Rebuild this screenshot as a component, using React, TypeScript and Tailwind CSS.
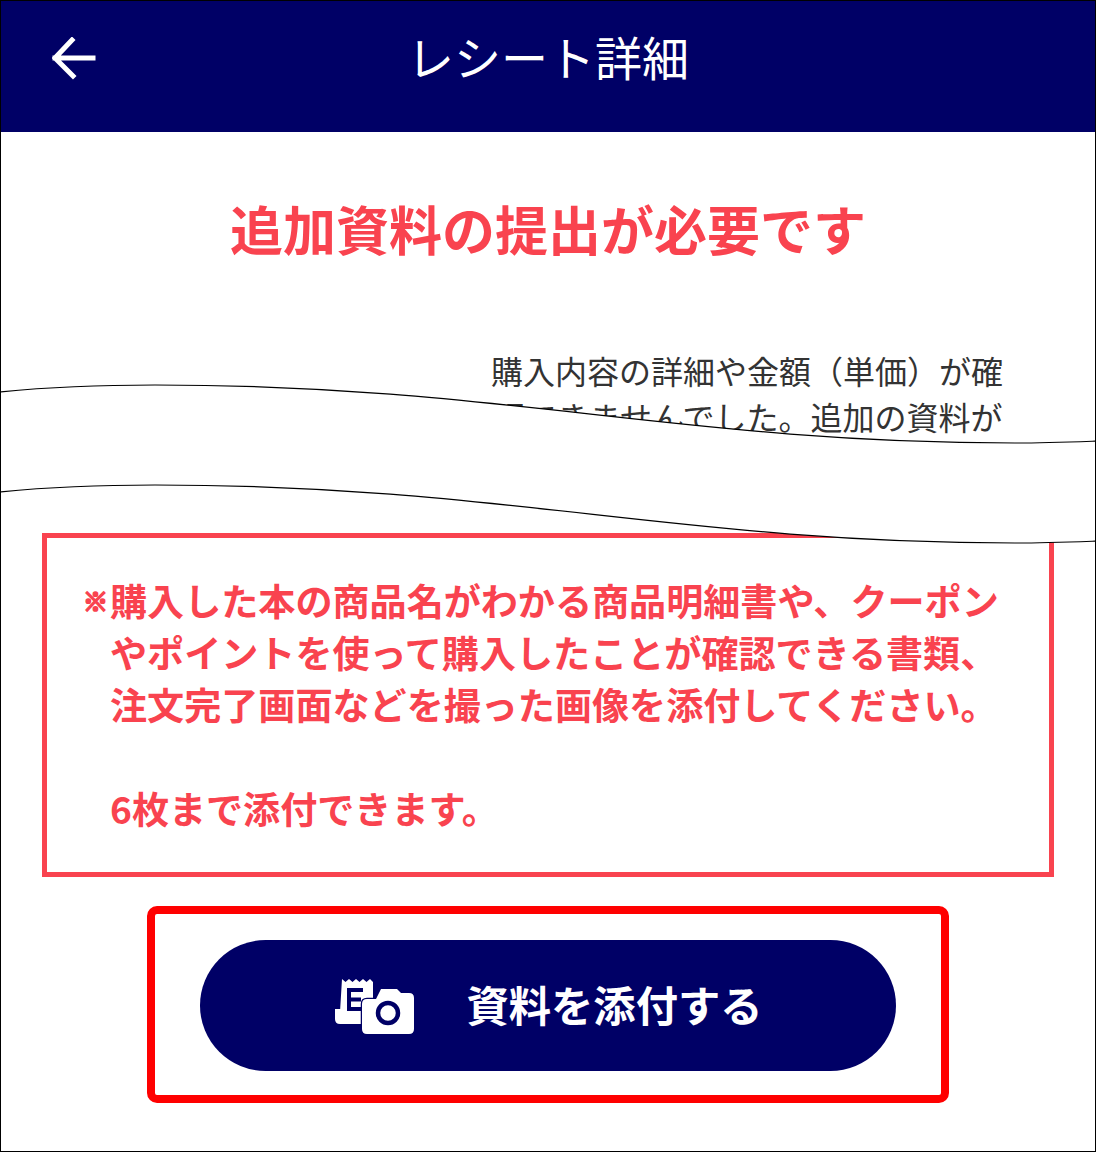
const FONT = '"Noto Sans CJK JP", "Liberation Sans", sans-serif';

function CameraReceiptIcon() {
  return (
    <svg width="84" height="64" viewBox="332 972 84 64" className="shrink-0 mb-[2px]">
      {/* tray */}
      <path d="M335 1008h32v15h-27q-5 0-5-5z" fill="#fff" />
      {/* receipt */}
      <path
        d="M342 978l3.5 3 3.5-3 3.5 3 3.5-3 3.5 3 3.5-3 3.5 3 3.5-3 3 3v30h-33z"
        fill="#fff"
      />
      <path d="M347 987h16v4h-12v5.5h10v4h-10v5.5h13v4h-17z" fill="#000066" />
      {/* camera */}
      <path
        d="M381 988h16l4 4h8q5 0 5 5v31q0 5-5 5h-42q-5 0-5-5v-25q0-5 5-5h9z"
        fill="#fff"
        stroke="#000066"
        strokeWidth="2.5"
        paintOrder="stroke"
      />
      <circle cx="388" cy="1012" r="10" fill="#fff" stroke="#000066" strokeWidth="4.5" />
    </svg>
  );
}

function WaveCut() {
  return (
    <svg
      width="1096"
      height="1152"
      viewBox="0 0 1096 1152"
      className="absolute left-0 top-0 pointer-events-none"
    >
      <path
        d="M-2 391C48 386 100 384 154 384C500 384 680 442 1014 442C1045 442 1070 441 1098 440V540C1070 541 1045 542 1014 542C680 542 500 484 154 484C100 484 48 486 -2 491Z"
        fill="#fff"
      />
      <path
        d="M-2 391C48 386 100 384 154 384C500 384 680 442 1014 442C1045 442 1070 441 1098 440"
        fill="none"
        stroke="#000"
        strokeWidth="1.2"
      />
      <path
        d="M-2 491C48 486 100 484 154 484C500 484 680 542 1014 542C1045 542 1070 541 1098 540"
        fill="none"
        stroke="#000"
        strokeWidth="1.2"
      />
    </svg>
  );
}

export default function App() {
  return (
    <div
      className="relative w-[1096px] h-[1152px] overflow-hidden bg-white border border-black flex flex-col"
      style={{ fontFamily: FONT }}
    >
      {/* Header */}
      <header className="relative h-[131px] shrink-0 bg-[#000066] flex items-center justify-center pb-[22px]">
        <svg width="46" height="44" viewBox="0 0 46 44" className="absolute left-[51px] top-[36px]">
          <path d="M41 21H3M20 3L3 21l18 18" fill="none" stroke="#fff" strokeWidth="5" strokeLinecap="square" />
        </svg>
        <h1 className="text-[47px] leading-none font-normal text-white">レシート詳細</h1>
      </header>

      {/* Title */}
      <h2 className="mt-[64px] text-center text-[53px] leading-[64px] font-bold text-[#f9434f]">
        追加資料の提出が必要です
      </h2>

      {/* Message, cut by the wave */}
      <div className="mt-[87px] ml-[490px] w-[514px] h-[186px] text-[32px] leading-[46px] text-[#333333]">
        <p className="whitespace-nowrap">購入内容の詳細や金額（単価）が確</p>
        <p className="whitespace-nowrap ml-[2px]">認できませんでした。追加の資料が</p>
      </div>

      {/* Notice box */}
      <div className="ml-[41px] w-[1012px] h-[344px] border-[5px] border-[#f9434f] pt-[36px] pl-[36px] text-[37.1px] leading-[52px] font-bold text-[#f9434f]">
        <div className="flex">
          <span className="w-[27px] shrink-0 text-[25px] [-webkit-text-stroke:2px_#f9434f]">※</span>
          <p className="whitespace-nowrap">
            購入した本の商品名がわかる商品明細書や、クーポン
            <br />
            やポイントを使って購入したことが確認できる書類、
            <br />
            注文完了画面などを撮った画像を添付してください。
            <br />
            <br />
            6枚まで添付できます。
          </p>
        </div>
      </div>

      {/* Attach button with highlight */}
      <div className="mt-[29px] ml-[146px] w-[802px] h-[197px] rounded-[10px] border-[8px] border-[#ff0000] pt-[26px] pl-[45px]">
        <button className="w-[696px] h-[131px] rounded-full bg-[#000066] flex items-center justify-center gap-[50px] pr-[1px] text-[42.3px] font-bold text-white">
          <CameraReceiptIcon />
          <span className="mb-[4px]">資料を添付する</span>
        </button>
      </div>

      <WaveCut />
    </div>
  );
}
